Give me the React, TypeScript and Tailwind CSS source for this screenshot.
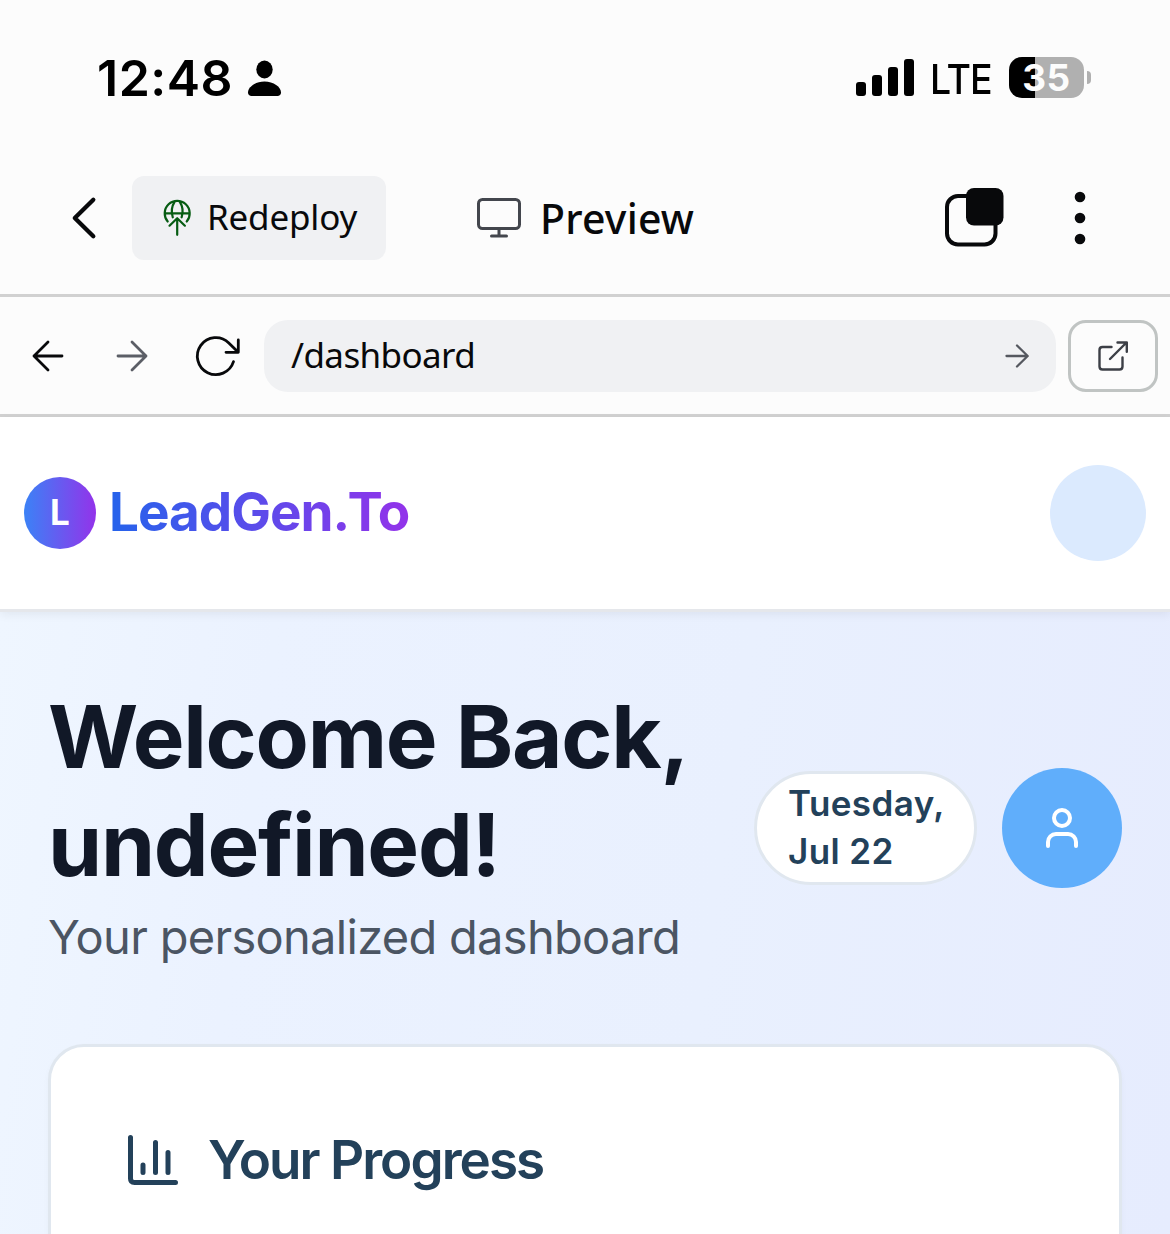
function StatusBar() {
  return (
    <div className="flex h-[156px] items-start pl-[97px] pt-[57px] text-black">
      <span className="w-[150px] whitespace-nowrap text-[50px] font-semibold leading-[42px] tracking-[0.5px]">12:48</span>
      <svg className="h-[42px] w-9" viewBox="247 57 36 42" fill="currentColor">
        <ellipse cx="264.5" cy="69.5" rx="8.2" ry="9" />
        <path d="M264.5 81.5c9 0 16.5 5.500 16.500 11 0 2-1.500 3.500-3.500 3.500h-26c-2 0-3.500-1.500-3.500-3.500 0-5.500 7.500-11 16.500-11z" />
      </svg>
      <svg className="ml-[573px] h-[42px] w-[60px]" viewBox="856 57 60 42" fill="currentColor">
        <rect x="856" y="82" width="10" height="14" rx="3" />
        <rect x="872" y="75" width="10" height="21" rx="3" />
        <rect x="888" y="67" width="10" height="29" rx="3" />
        <rect x="904" y="59" width="10" height="37" rx="3" />
      </svg>
      <span className="ml-[14px] w-[79px] origin-left scale-x-[0.915] whitespace-nowrap text-[41px] font-medium leading-[44px] tracking-[-1.2px]">LTE</span>
      <div className="flex h-[41px] w-[75px] items-center justify-center rounded-[13px] bg-[linear-gradient(90deg,#000_26px,#b0b0b0_26px)] text-[37px] font-bold leading-none tracking-[0.5px] text-[#fcfcfc]">35</div>
      <div className="ml-[3px] mt-[14px] h-[13px] w-[4px] rounded-r-full bg-[#b0b0b0]" />
    </div>
  );
}

function Toolbar() {
  return (
    <div className="flex h-[141px] items-start border-b-[3px] border-[#d1d1d1] pt-5 font-['Noto_Sans',sans-serif] text-[#08090b]">
      <svg className="ml-[66px] h-[84px] w-[36px]" viewBox="66 176 36 84" fill="none" stroke="currentColor" strokeWidth="4.300" strokeLinecap="round" strokeLinejoin="round">
        <path d="M93.300 199.700 74.800 218l18.500 18.300" />
      </svg>
      <div className="ml-[30px] flex h-[84px] w-[254px] items-center rounded-xl bg-[#f0f1f3] pl-[27px]">
        <svg className="h-[42px] w-9" viewBox="159 197 36 42" fill="none" stroke="#065c12" strokeWidth="2.200" strokeLinecap="round" strokeLinejoin="round">
          <path d="M167.700 221.500a12.500 12.500 0 1 1 19 0M164.800 213.300h24.800M172.800 217.300c-1.800-5-.8-11.500 2-16M181.600 217.300c1.800-5 .8-11.500-2-16M177.200 234.800v-16.500M169.500 225.700l7.700-7.500 7.700 7.500" />
        </svg>
        <span className="mb-0.5 ml-3 whitespace-nowrap text-[35px] leading-[46px] tracking-[-0.2px]">Redeploy</span>
      </div>
      <svg className="ml-[88px] h-[84px] w-[50px]" viewBox="474 176 50 84" fill="none" stroke="#43464d" strokeWidth="3" strokeLinecap="round">
        <rect x="478.500" y="199.500" width="41" height="29" rx="4" />
        <path d="M499 229v7M491.500 236h15" />
      </svg>
      <span className="ml-4 w-[400px] whitespace-nowrap text-[41px] font-medium leading-[84px] tracking-[0.2px]">Preview</span>
      <svg className="h-[84px] w-[68px]" viewBox="940 176 68 84">
        <rect x="947" y="196" width="48.500" height="48.500" rx="11" fill="none" stroke="currentColor" strokeWidth="4" />
        <rect x="966" y="188" width="37.500" height="37.500" rx="8" fill="currentColor" />
      </svg>
      <svg className="ml-[64px] h-[84px] w-4" viewBox="1072 176 16 84" fill="currentColor">
        <circle cx="1080" cy="197" r="5.300" />
        <circle cx="1080" cy="218" r="5.300" />
        <circle cx="1080" cy="239" r="5.300" />
      </svg>
    </div>
  );
}

function AddressBar() {
  return (
    <div className="flex h-[120px] items-start border-b-[3px] border-[#d1d1d1] pl-6 pt-[23px] font-['Noto_Sans',sans-serif] text-[#08090b]">
      <svg className="h-[72px] w-[240px]" viewBox="24 320 240 72" fill="none" stroke="currentColor" strokeWidth="2.800" strokeLinecap="round" strokeLinejoin="round">
        <path d="M62 356H34M48 342l-14 14 14 14" />
        <path stroke="#5b5e66" d="M118 356h28M132 342l14 14-14 14" />
        <path d="M233.500 361.700a18.500 18.500 0 1 1-4.700-18.800l9.200 9.200M238.300 340v12.300H226" />
      </svg>
      <div className="flex h-[72px] w-[792px] items-center justify-between rounded-3xl bg-[#f0f1f3] pl-[27px] pr-6">
        <span className="mb-0.5 text-[35px] leading-[48px] tracking-[-0.600px]">/dashboard</span>
        <svg className="h-[30px] w-[30px]" viewBox="1002 341 30 30" fill="none" stroke="#55585f" strokeWidth="2.300" strokeLinecap="round" strokeLinejoin="round">
          <path d="M1006.500 356h21M1017 345.500l10.700 10.500-10.700 10.500" />
        </svg>
      </div>
      <div className="ml-3 flex h-[72px] w-[90px] items-center justify-center rounded-[18px] border-[3px] border-[#c0c4c3]">
        <svg className="h-9 w-9" viewBox="1095 338 36 36" fill="none" stroke="#3c3f46" strokeWidth="2.400" strokeLinecap="round" strokeLinejoin="round">
          <path d="M1111.500 347h-9q-3 0-3 3v16.500q0 3 3 3h17q3 0 3-3v-9M1110 359l16.500-16.500M1117.500 342.500h9.300v9.300" />
        </svg>
      </div>
    </div>
  );
}

function SiteHeader() {
  return (
    <header className="relative flex h-[195px] items-center justify-between border-b-[3px] border-[#e5e7eb] bg-white px-6 shadow-[0_3px_9px_rgba(0,0,0,0.06)]">
      <div className="flex items-center">
        <div className="flex h-[72px] w-[72px] items-center justify-center rounded-full bg-[linear-gradient(90deg,#3b82f6,#9333ea)] pb-px text-[35px] font-bold text-white">L</div>
        <span className="mb-0.5 ml-[13px] bg-[linear-gradient(90deg,#2563eb,#9333ea)] bg-clip-text text-[53px] font-bold leading-[72px] tracking-[-1px] text-transparent">LeadGen.To</span>
      </div>
      <div className="h-24 w-24 rounded-full bg-[#dbeafe]" />
    </header>
  );
}

function Dashboard() {
  return (
    <main className="h-[622px] overflow-hidden bg-[linear-gradient(98deg,#eff6ff_0%,#ebf2ff_22%,#e9f0fe_60%,#e6ecfe_100%)] px-12 pt-[72px]">
      <div className="flex h-[288px] items-center">
        <div className="w-[706px] whitespace-nowrap">
          <h1 className="-mt-px text-[87px] font-bold leading-[108px] tracking-[-1.250px] text-[#111827]">
            Welcome Back,
            <br />
            undefined!
          </h1>
          <p className="mt-0.5 text-[47px] leading-[72px] tracking-[-0.700px] text-[#4b5563]">Your personalized dashboard</p>
        </div>
        <div className="flex h-[114px] w-[223px] items-center whitespace-nowrap rounded-full border-[3px] border-[#e0e7ef] bg-white pb-0.5 pl-[31px] text-[35px] font-semibold leading-[48px] tracking-[0.4px] text-[#23415a]">
          <div>
            Tuesday,
            <br />
            Jul 22
          </div>
        </div>
        <div className="ml-[25px] flex h-[120px] w-[120px] items-center justify-center rounded-full bg-[#60aefb]">
          <svg className="h-12 w-12" viewBox="0 0 24 24" fill="none" stroke="#fff" strokeWidth="2" strokeLinecap="round" strokeLinejoin="round">
            <circle cx="12" cy="7" r="4" />
            <path d="M19 21v-2a4 4 0 0 0-4-4H9a4 4 0 0 0-4 4v2" />
          </svg>
        </div>
      </div>
      <section className="mt-[72px] h-[260px] rounded-[36px] border-[3px] border-[#e0e7ef] bg-white pl-[69px] pt-[77px] shadow-[0_3px_6px_rgba(0,0,0,0.03)]">
        <div className="flex items-center text-[#23415a]">
          <svg className="h-[72px] w-[72px]" viewBox="120 1125 72 72" fill="none" stroke="currentColor" strokeWidth="5" strokeLinecap="round" strokeLinejoin="round">
            <path d="M130.500 1138.500v41q0 4 4 4h41M143 1166v7.500M155.500 1143.500v30M168 1153.500v20" />
          </svg>
          <h2 className="ml-4 whitespace-nowrap text-[53px] font-semibold leading-[72px] tracking-[-1.950px]">Your Progress</h2>
        </div>
      </section>
    </main>
  );
}

export default function App() {
  return (
    <div className="h-[1234px] w-[1170px] overflow-hidden bg-[#fcfcfc] font-['Inter',sans-serif]">
      <StatusBar />
      <Toolbar />
      <AddressBar />
      <SiteHeader />
      <Dashboard />
    </div>
  );
}
